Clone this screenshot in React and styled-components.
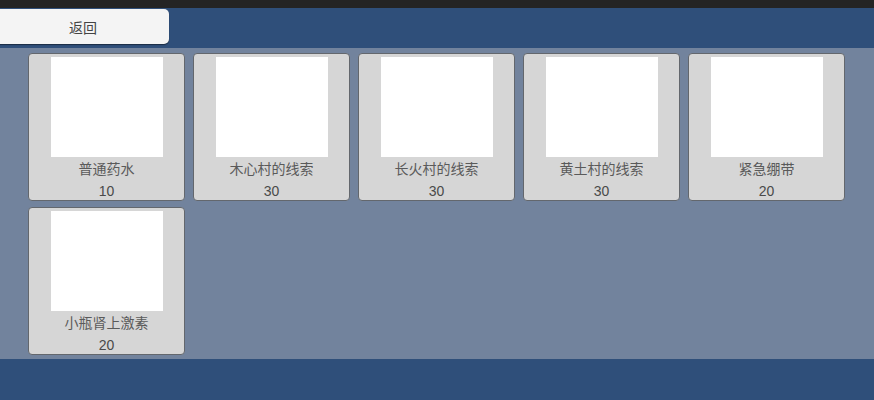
import React from "react";
import styled, { createGlobalStyle } from "styled-components";

const Global = createGlobalStyle`
  html, body { margin: 0; padding: 0; }
  body {
    width: 874px;
    height: 400px;
    overflow: hidden;
    background: #2f4f7a;
    font-family: "Liberation Sans", "Noto Sans CJK SC", sans-serif;
  }
`;

const Page = styled.div`
  width: 874px;
  height: 400px;
  display: flex;
  flex-direction: column;
  background: #2f4f7a;
`;

const TopStrip = styled.div`
  height: 8px;
  background: #242424;
`;

const Header = styled.div`
  height: 40px;
  display: flex;
  align-items: flex-start;
  padding-top: 1px;
  box-sizing: border-box;
`;

const BackButton = styled.button`
  margin-left: -3px;
  width: 172px;
  height: 35px;
  border: none;
  border-radius: 0 5px 5px 0;
  background: #f4f4f4;
  box-shadow: 0 1px 1px rgba(0, 0, 0, 0.45);
  font-family: "Liberation Sans", "Noto Sans CJK SC", sans-serif;
  font-size: 14px;
  color: #444;
  padding: 0;
  cursor: pointer;
`;

const Content = styled.div`
  height: 311px;
  background: #72839d;
  box-sizing: border-box;
  padding: 5px 0 0 28px;
  display: grid;
  grid-template-columns: repeat(5, 157px);
  grid-auto-rows: 148px;
  column-gap: 8px;
  row-gap: 6px;
  align-content: start;
`;

const Card = styled.div`
  box-sizing: border-box;
  height: 148px;
  background: #d6d6d6;
  border: 1px solid #63676d;
  border-radius: 4px;
  display: flex;
  flex-direction: column;
  align-items: center;
  padding-top: 3px;
  overflow: hidden;
`;

const Thumb = styled.div`
  width: 112px;
  height: 100px;
  background: #ffffff;
  flex-shrink: 0;
`;

const Name = styled.div`
  margin-top: 1px;
  line-height: 22px;
  font-size: 14px;
  color: #5a5a5a;
`;

const Price = styled.div`
  margin-top: 2px;
  line-height: 19px;
  font-size: 14px;
  color: #4a4a4a;
`;

const items = [
  { name: "普通药水", price: 10 },
  { name: "木心村的线索", price: 30 },
  { name: "长火村的线索", price: 30 },
  { name: "黄土村的线索", price: 30 },
  { name: "紧急绷带", price: 20 },
  { name: "小瓶肾上激素", price: 20 },
];

export default function App() {
  return (
    <>
      <Global />
      <Page>
        <TopStrip />
        <Header>
          <BackButton>返回</BackButton>
        </Header>
        <Content>
          {items.map((it) => (
            <Card key={it.name}>
              <Thumb />
              <Name>{it.name}</Name>
              <Price>{it.price}</Price>
            </Card>
          ))}
        </Content>
      </Page>
    </>
  );
}
